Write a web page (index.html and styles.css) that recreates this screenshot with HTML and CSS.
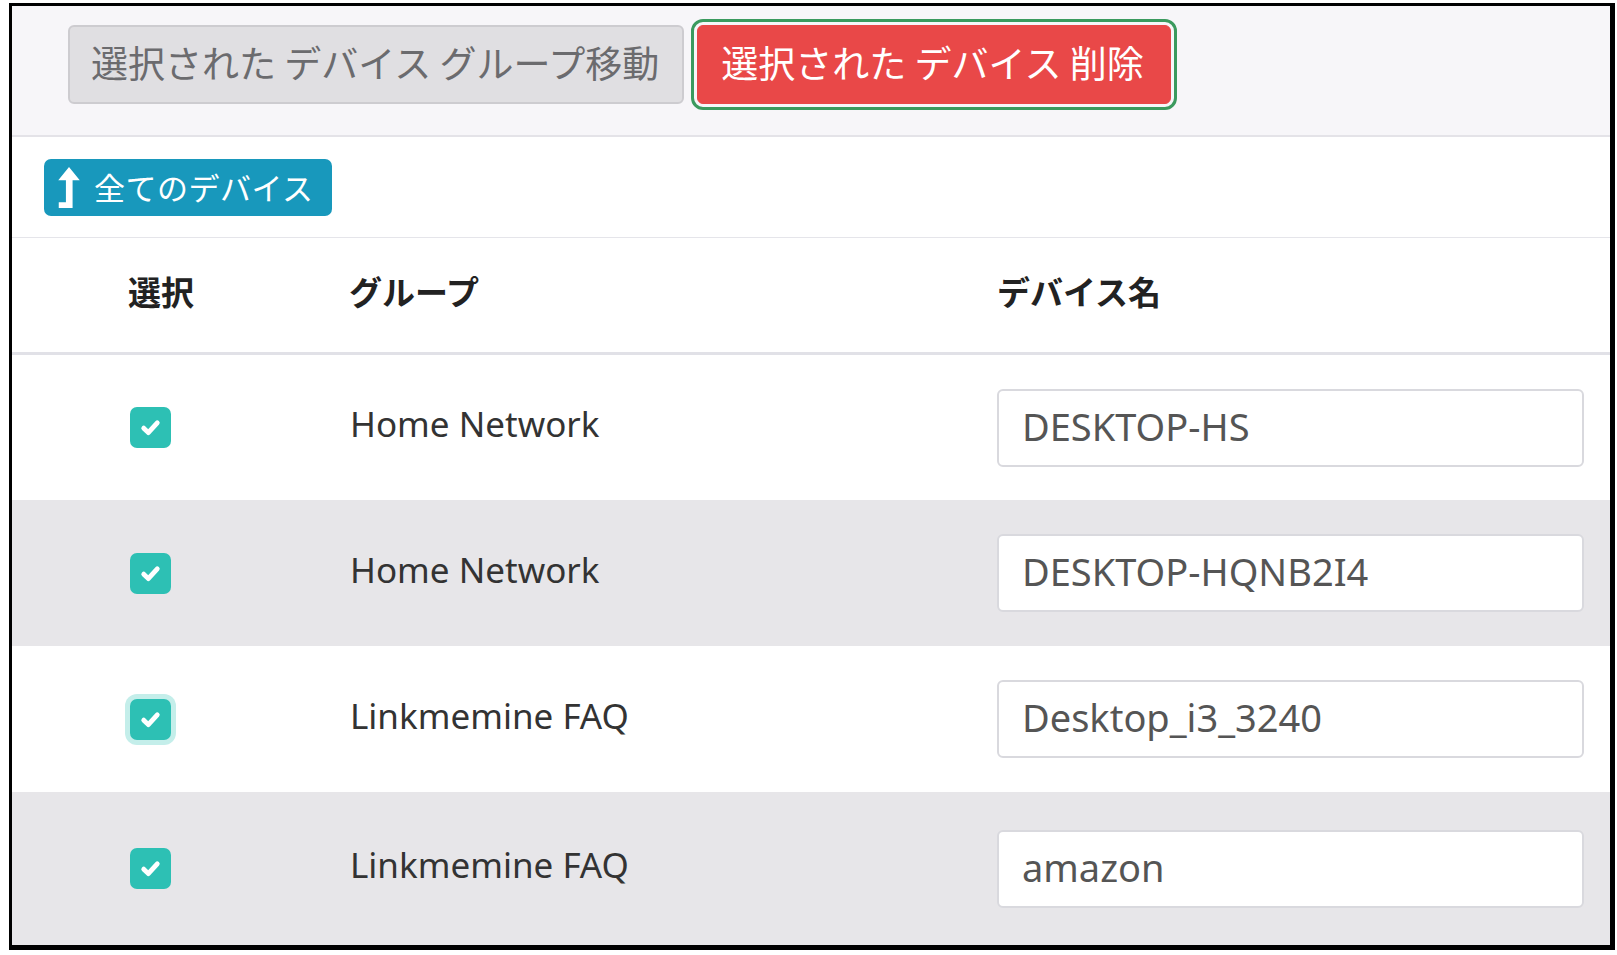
FILE: index.html
```html
<!DOCTYPE html>
<html lang="ja">
<head>
<meta charset="utf-8">
<title>デバイス</title>
<link rel="stylesheet" href="styles.css">
</head>
<body>
<div class="frame">
  <div class="topbar">
    <button class="btn btn-gray">選択された デバイス グループ移動</button>
    <button class="btn btn-red">選択された デバイス 削除</button>
  </div>
  <div class="filterbar">
    <button class="btn-blue">
      <svg class="lvl" viewBox="0 0 22 40" aria-hidden="true"><path d="M11 0 L21.5 13 L14.5 13 L14.5 40 L1 40 L1 34.5 L8 34.5 L8 13 L0.5 13 Z" fill="#fff"/></svg>
      <span>全てのデバイス</span>
    </button>
  </div>
  <div class="table">
    <div class="grid thead">
      <div>選択</div>
      <div>グループ</div>
      <div>デバイス名</div>
    </div>
    <div class="grid trow first">
      <div><span class="chk"><svg viewBox="0 0 20 20"><path d="M5 10.5 L8.4 13.8 L15 6.6" fill="none" stroke="#fff" stroke-width="3.6" stroke-linecap="round" stroke-linejoin="round"/></svg></span></div>
      <div class="grp">Home Network</div>
      <div><input class="name" type="text" value="DESKTOP-HS"></div>
    </div>
    <div class="grid trow alt">
      <div><span class="chk"><svg viewBox="0 0 20 20"><path d="M5 10.5 L8.4 13.8 L15 6.6" fill="none" stroke="#fff" stroke-width="3.6" stroke-linecap="round" stroke-linejoin="round"/></svg></span></div>
      <div class="grp">Home Network</div>
      <div><input class="name" type="text" value="DESKTOP-HQNB2I4"></div>
    </div>
    <div class="grid trow">
      <div><span class="chk focus"><svg viewBox="0 0 20 20"><path d="M5 10.5 L8.4 13.8 L15 6.6" fill="none" stroke="#fff" stroke-width="3.6" stroke-linecap="round" stroke-linejoin="round"/></svg></span></div>
      <div class="grp">Linkmemine FAQ</div>
      <div><input class="name" type="text" value="Desktop_i3_3240"></div>
    </div>
    <div class="grid trow alt last">
      <div><span class="chk"><svg viewBox="0 0 20 20"><path d="M5 10.5 L8.4 13.8 L15 6.6" fill="none" stroke="#fff" stroke-width="3.6" stroke-linecap="round" stroke-linejoin="round"/></svg></span></div>
      <div class="grp">Linkmemine FAQ</div>
      <div><input class="name" type="text" value="amazon"></div>
    </div>
  </div>
</div>
</body>
</html>
```

FILE: styles.css
```css
* { box-sizing: border-box; }

html, body {
  margin: 0;
  padding: 0;
  background: #ffffff;
}

body {
  font-family: "Noto Sans", "Noto Sans CJK JP", sans-serif;
  color: #333;
  overflow: hidden;
}

.frame {
  margin: 3px 2px 0 9px;
  border-style: solid;
  border-color: #000;
  border-width: 3px 5px 5px 3px;
  background: #fff;
}

/* top action bar */
.topbar {
  height: 131px;
  background: #f7f6f9;
  border-bottom: 2px solid #e4e3e8;
  display: flex;
  align-items: flex-start;
  gap: 13px;
  padding: 19px 0 0 56px;
}

.btn {
  height: 79px;
  padding: 0 23px 5px;
  border-radius: 6px;
  font-family: "Noto Sans CJK JP", sans-serif;
  font-size: 37px;
  line-height: 1;
  white-space: pre;
  cursor: pointer;
}

.btn-gray {
  background: #e0dfe2;
  border: 2px solid #cdccd0;
  color: #6b6b6e;
  padding-left: 21px;
}

.btn-red {
  background: #e94848;
  border: 1px solid #e94848;
  color: #fff;
  outline: 3px solid #3b9a5e;
  outline-offset: 3px;
  padding-right: 26px;
}

/* filter bar */
.filterbar {
  height: 101px;
  border-bottom: 1px solid #e5e5ea;
  padding: 22px 0 0 32px;
}

.btn-blue {
  height: 57px;
  display: inline-flex;
  align-items: center;
  gap: 13px;
  padding: 0 18px 3px 13px;
  background: #1898bc;
  border: none;
  border-radius: 7px;
  color: #fff;
  font-family: "Noto Sans CJK JP", sans-serif;
  font-size: 31px;
  letter-spacing: 0.5px;
  line-height: 1;
}

.lvl {
  width: 24px;
  height: 41px;
  display: block;
  margin-top: 3px;
}

/* table */
.grid {
  display: grid;
  grid-template-columns: 221px 648px 1fr;
  align-items: center;
  padding: 0 26px 0 116px;
}

.thead {
  height: 117px;
  border-bottom: 3px solid #e1e1e7;
  font-family: "Noto Sans CJK JP", sans-serif;
  font-weight: 700;
  font-size: 33px;
  color: #222;
  padding-bottom: 8px;
}

.trow {
  height: 146px;
  background: #fff;
}

.trow.first {
  height: 145px;
}

.trow.alt {
  background: #e7e6e9;
}

.trow.last {
  height: 153px;
}

.chk {
  width: 41px;
  height: 41px;
  margin-left: 2px;
  border-radius: 7px;
  background: #2dc0b4;
  display: flex;
  align-items: center;
  justify-content: center;
}

.chk svg {
  width: 27px;
  height: 27px;
  display: block;
}

.chk.focus {
  box-shadow: 0 0 0 5px #c4eeea;
}

.grp {
  font-size: 35px;
  color: #333;
  padding-left: 1px;
  padding-bottom: 8px;
}

.name {
  display: block;
  width: 100%;
  height: 78px;
  margin: 0;
  padding: 0 0 4px 23px;
  border: 2px solid #d9d9de;
  border-radius: 6px;
  background: #fff;
  font-family: "Noto Sans", sans-serif;
  font-size: 38px;
  color: #555;
  outline: none;
}
```
